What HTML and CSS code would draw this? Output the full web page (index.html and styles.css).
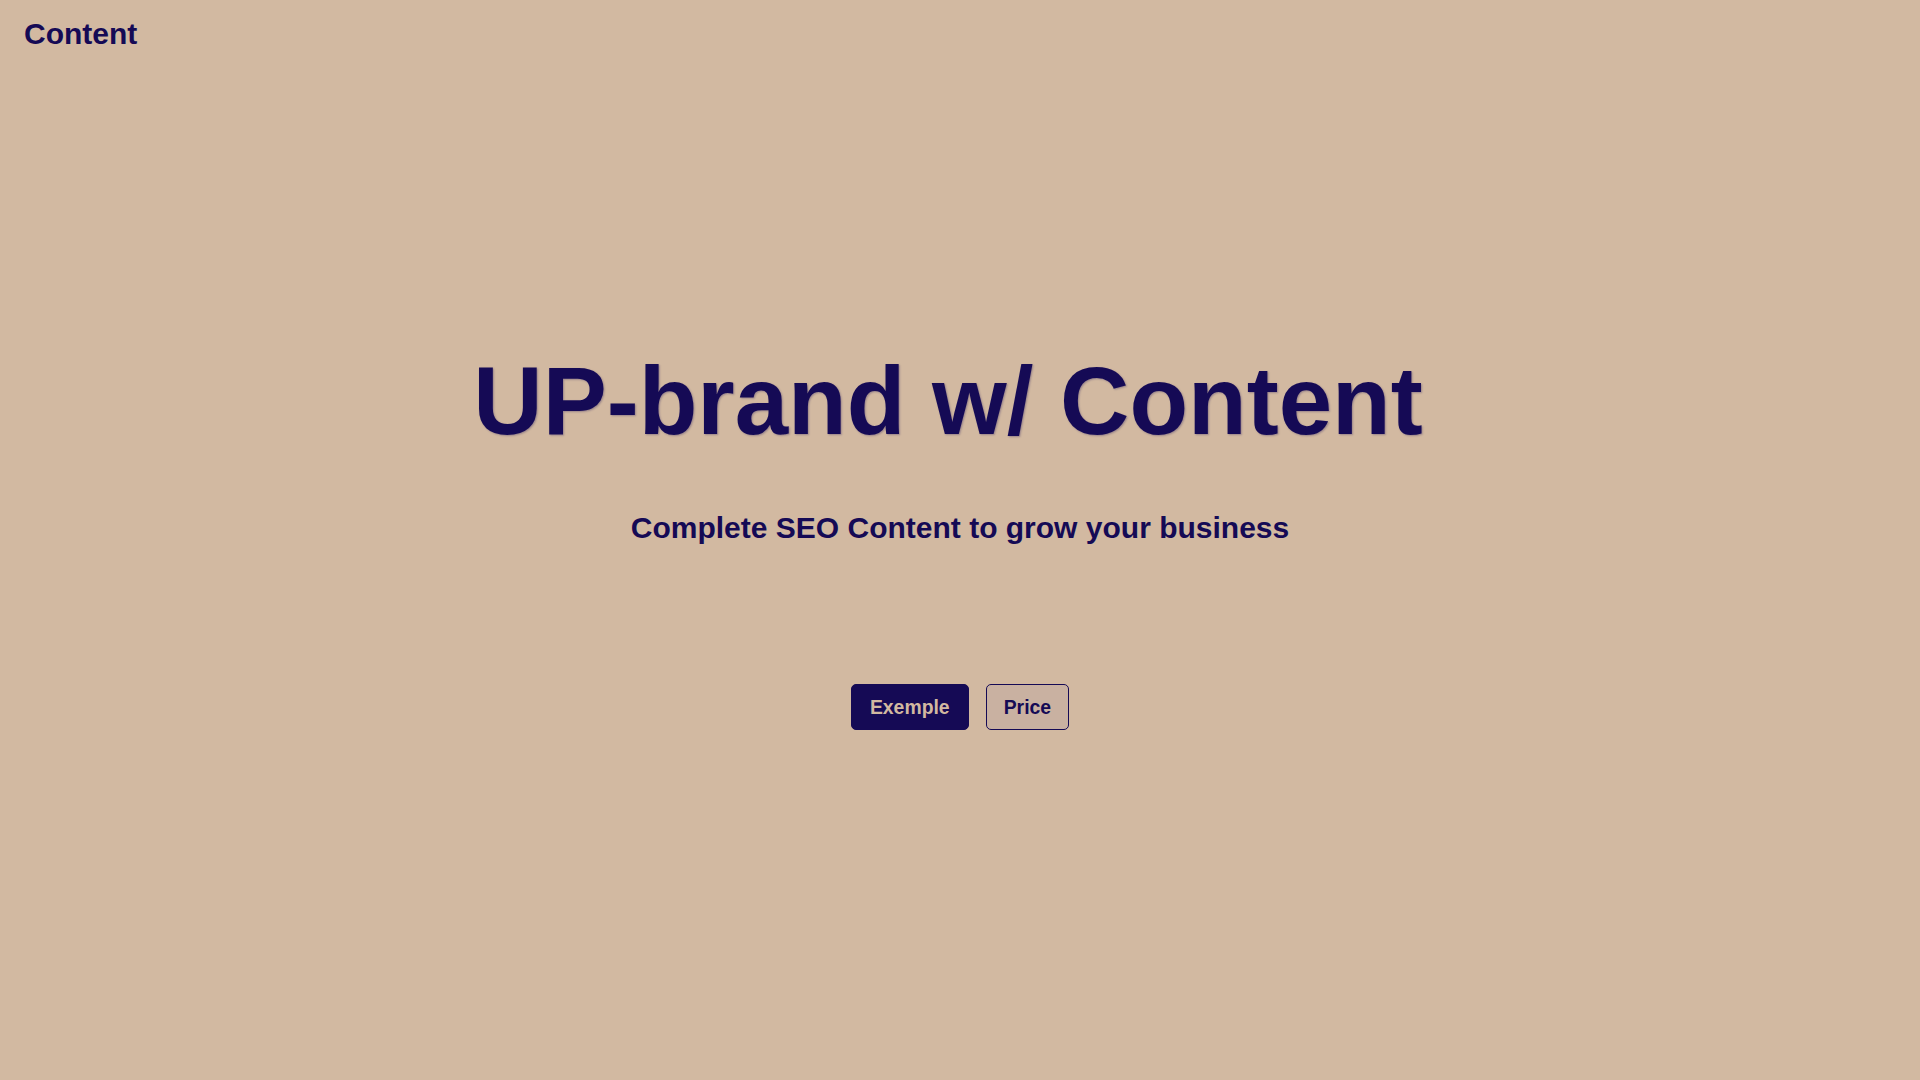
FILE: index.html
```html
<!DOCTYPE html>
<html lang="en">
<head>
<meta charset="utf-8">
<title>UP-brand w/ Content</title>
<link rel="stylesheet" href="styles.css">
</head>
<body>
<header class="header">
  <div class="logo">Content</div>
</header>
<main class="hero">
  <h1 class="title">UP-brand w/ Content</h1>
  <p class="subtitle">Complete SEO Content to grow your business</p>
  <div class="actions">
    <a class="btn btn-primary" href="#">Exemple</a>
    <a class="btn btn-outline" href="#">Price</a>
  </div>
</main>
</body>
</html>
```

FILE: styles.css
```css
html, body {
  margin: 0;
  padding: 0;
}
body {
  background: #d2b9a1;
  color: #150a55;
  font-family: "Liberation Sans", Arial, sans-serif;
  width: 1920px;
  height: 1080px;
  overflow: hidden;
}
.header {
  padding: 17px 24px 0;
}
.logo {
  font-size: 30px;
  font-weight: bold;
  line-height: 33px;
}
.hero {
  display: flex;
  flex-direction: column;
  align-items: center;
}
.title {
  margin: 297px 24px 0 0;
  font-size: 96px;
  font-weight: bold;
  line-height: 107px;
  text-shadow: 1px 1px 2px rgba(20, 10, 85, 0.3);
}
.subtitle {
  margin: 57px 0 0;
  font-size: 30px;
  font-weight: bold;
  line-height: 33px;
}
.actions {
  margin-top: 140px;
  display: flex;
  gap: 17px;
}
.btn {
  display: block;
  box-sizing: border-box;
  height: 46px;
  padding: 0 18px;
  line-height: 44px;
  font-size: 19.4px;
  font-weight: bold;
  text-decoration: none;
  border-radius: 5px;
  border: 1px solid #150a55;
}
.btn-primary {
  background: #150a55;
  color: #d2b9a1;
}
.btn-outline {
  background: #c9b1a1;
  color: #150a55;
  padding: 0 17px;
}
```
